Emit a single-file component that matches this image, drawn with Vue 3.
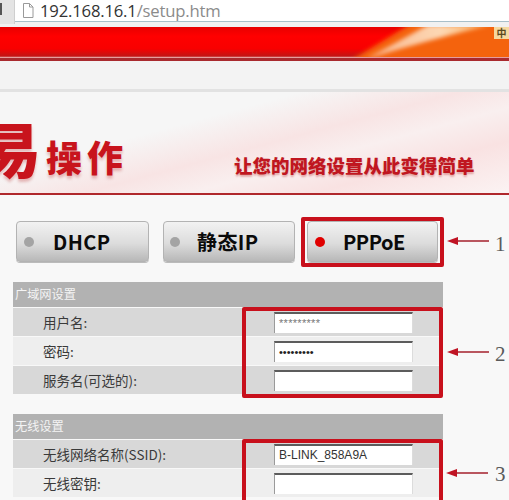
<script setup>
const modes = [
  { label: 'DHCP', on: false },
  { label: '静态IP', on: false },
  { label: 'PPPoE', on: true },
]
const wan = [
  { label: '用户名:', value: '*********', cls: 'stars' },
  { label: '密码:', value: '•••••••••', cls: 'dots' },
  { label: '服务名(可选的):', value: '', cls: '' },
]
const wifi = [
  { label: '无线网络名称(SSID):', value: 'B-LINK_858A9A', cls: '' },
  { label: '无线密钥:', value: '', cls: '' },
]
</script>

<template>
  <div class="page">
    <header class="browser">
      <div class="nav"><span class="nav-mark"></span></div>
      <div class="address">
        <svg class="doc" viewBox="0 0 12 15" width="12" height="15">
          <path d="M1.5 .5h6l3.5 3.5v10.5h-9.500z M7.500 .5v3.500h3.500" fill="#fff" stroke="#9a9a9a" />
        </svg>
        <span class="host">192.168.16.1</span><span class="path">/setup.htm</span>
      </div>
    </header>

    <div class="banner">
      <svg class="flare" viewBox="0 0 509 30" width="509" height="30">
        <defs>
          <filter id="soft" x="-10%" y="-50%" width="120%" height="200%"><feGaussianBlur stdDeviation="2" /></filter>
          <linearGradient id="pale" x1="0" y1="0" x2="1" y2="0">
            <stop offset="0" stop-color="#f9b48c" />
            <stop offset=".6" stop-color="#fdd8b4" />
            <stop offset="1" stop-color="#f9b060" />
          </linearGradient>
        </defs>
        <path d="M350 34L412 -4H515V34Z" fill="#f46410" filter="url(#soft)" />
        <path d="M366 32L428 -2H490Q432 12 366 32Z" fill="url(#pale)" filter="url(#soft)" />
      </svg>
      <span class="banner-tag">中</span>
    </div>
    <div class="strip"></div>

    <section class="hero">
      <div class="wash"></div>
      <div class="title"><span class="big">易</span><span class="mid">操作</span></div>
      <div class="slogan">让您的网络设置从此变得简单</div>
    </section>

    <main class="content">
      <div class="modes">
        <button v-for="m in modes" :key="m.label" class="mode" type="button">
          <span class="dot" :class="{ on: m.on }"></span>
          <span class="mode-label">{{ m.label }}</span>
        </button>
      </div>

      <div class="group first">
        <div class="group-head">广域网设置</div>
        <div v-for="r in wan" :key="r.label" class="row">
          <span class="row-label">{{ r.label }}</span>
          <span class="field" :class="r.cls">{{ r.value }}</span>
        </div>
      </div>

      <div class="group second">
        <div class="group-head">无线设置</div>
        <div v-for="r in wifi" :key="r.label" class="row">
          <span class="row-label">{{ r.label }}</span>
          <span class="field">{{ r.value }}</span>
        </div>
      </div>
    </main>

    <div class="mark box1"></div>
    <div class="mark box2"></div>
    <div class="mark box3"></div>

    <svg class="arrow a1" viewBox="0 0 44 12" width="44" height="12"><path d="M42 6H8" stroke="#a5202c" stroke-width="1.500"/><path d="M0 6l11-4v8z" fill="#c01424"/></svg>
    <svg class="arrow a2" viewBox="0 0 44 12" width="44" height="12"><path d="M42 6H8" stroke="#a5202c" stroke-width="1.500"/><path d="M0 6l11-4v8z" fill="#c01424"/></svg>
    <svg class="arrow a3" viewBox="0 0 44 12" width="44" height="12"><path d="M42 6H8" stroke="#a5202c" stroke-width="1.500"/><path d="M0 6l11-4v8z" fill="#c01424"/></svg>
    <span class="num n1">1</span>
    <span class="num n2">2</span>
    <span class="num n3">3</span>
  </div>
</template>

<style>
html, body { margin: 0; background: #f8f8f8; overflow: hidden; }
</style>

<style scoped>
.page {
  position: relative;
  width: 509px;
  height: 500px;
  overflow: hidden;
  background: #f8f8f8;
  font-family: "Noto Sans CJK SC", "Noto Sans", sans-serif;
}
.browser { display: flex; height: 27px; background: #f1f1f1; }
.nav { width: 15px; height: 24px; background: #e4e4e4; border-right: 1px solid #cfcfcf; box-sizing: border-box; }
.nav-mark { display: block; width: 2px; height: 12px; margin-top: 3px; background: #555; }
.address {
  flex: 1;
  height: 21px;
  display: flex;
  align-items: center;
  background: #fff;
  border-bottom: 1px solid #a9bfc9;
  font-family: "Open Sans", sans-serif;
  font-size: 16.700px;
  letter-spacing: -0.2px;
}
.doc { margin: 0 6px 0 7px; }
.host { color: #333; }
.path { color: #8b8b8b; }

.banner {
  position: relative;
  height: 31px;
  overflow: hidden;
  background: linear-gradient(#e80000 0, #ff0000 30%, #f80000 70%, #c21414 94%, #f3d0d0 100%);
}
.flare { position: absolute; left: 0; top: 0; display: block; }
.banner-tag { position: absolute; right: 0; top: 0; width: 15px; text-align: center; font-size: 10px; font-weight: 700; line-height: 12px; color: #5a4a20; background: #f6d9a0; }
.strip {
  height: 34px;
  box-sizing: border-box;
  border-top: 3px solid #a92a2e;
  border-bottom: 3px solid #e2e2e2;
  background: #f3f3f3;
}
.hero {
  position: relative;
  height: 103px;
  box-sizing: border-box;
  background: #f6f6f6;
  border-bottom: 2px solid #b0282c;
  overflow: hidden;
}
.wash {
  position: absolute;
  inset: 0;
  background:
    linear-gradient(165deg, transparent 34%, #f8e4e4 52%, #f9efef 64%, #f9e2e2 78%, #fbf3f3 100%);
}
.title {
  position: absolute;
  left: -19px;
  top: 25px;
  display: flex;
  align-items: flex-end;
  color: #c8141c;
  font-weight: 900;
  line-height: 1;
  text-shadow: 0 3px 3px rgba(170, 0, 0, .25);
  white-space: nowrap;
}
.big { font-size: 60px; }
.mid { font-size: 36px; letter-spacing: 5px; margin-left: 5px; margin-bottom: 3px; }
.slogan {
  position: absolute;
  left: 234px;
  top: 61px;
  font-size: 18.500px;
  line-height: 24px;
  font-weight: 900;
  color: #c01620;
  white-space: nowrap;
  text-shadow: 0 2px 2px rgba(170, 0, 0, .3);
}

.content { padding: 26px 0 0 13px; width: 430px; }
.modes { display: flex; padding-left: 3px; }
.mode {
  display: flex;
  align-items: center;
  width: 133px;
  height: 41px;
  padding: 0 0 0 7px;
  margin-right: 14px;
  flex: none;
  border: 1px solid #b3b3b3;
  border-radius: 4px;
  background: linear-gradient(#f2f2f2, #dcdcdc 55%, #b8b8b8);
  box-shadow: 0 1px 0 #bbb;
  box-sizing: border-box;
  font-family: "Noto Sans CJK SC", "Noto Sans", sans-serif;
}
.mode:nth-child(2) { width: 132px; margin-right: 12px; padding-left: 6px; }
.mode:nth-child(3) { width: 131px; margin-right: 0; }
.dot { width: 10px; height: 10px; border-radius: 50%; background: #a4a4a4; flex: none; }
.dot.on { background: #e00000; }
.mode-label { margin-left: 19px; font-size: 20px; font-weight: 700; color: #0a0a0a; letter-spacing: .4px; }
.mode:nth-child(2) .mode-label { margin-left: 17px; }
.mode:nth-child(3) .mode-label { margin-left: 18px; letter-spacing: -.5px; }

.group-head {
  height: 25px;
  line-height: 25px;
  padding-left: 2px;
  background: #b2b2b2;
  color: #f4f4f4;
  font-size: 12.200px;
}
.group.first { margin-top: 20px; }
.group.second { margin-top: 20px; }
.row {
  display: flex;
  align-items: center;
  height: 28px;
  background: #d8d8d8;
  font-size: 13.500px;
  color: #3a3a3a;
  margin-top: 1px;
}
.row:nth-child(3) { background: #eeeeee; }
.row-label { width: 261px; padding-left: 30px; box-sizing: border-box; white-space: nowrap; }
.field {
  display: block;
  width: 139px;
  height: 21px;
  line-height: 19px;
  padding-left: 4px;
  box-sizing: border-box;
  background: #fff;
  border-top: 2px solid #5c5c5c;
  border-left: 1px solid #9a9a9a;
  border-right: 1px solid #dcdcdc;
  font-family: "Liberation Sans", sans-serif;
  font-size: 12px;
  color: #333;
}
.field.stars { font-size: 11px; color: #777; letter-spacing: .3px; }
.field.dots { font-size: 11px; color: #222; letter-spacing: 0; }

.mark { position: absolute; border: 4px solid #c8101c; border-radius: 2px; box-sizing: border-box; }
.box1 { left: 301px; top: 217px; width: 143px; height: 50px; }
.box2 { left: 242px; top: 307px; width: 201px; height: 91px; }
.box3 { left: 242px; top: 439px; width: 201px; height: 70px; }

.arrow { position: absolute; }
.a1 { left: 447px; top: 235px; }
.a2 { left: 447px; top: 346px; }
.a3 { left: 446px; top: 467px; }
.num { position: absolute; left: 495px; font-family: "Liberation Serif", serif; font-size: 21px; line-height: 20px; color: #5a5a5a; }
.n1 { top: 234px; }
.n2 { top: 344px; }
.n3 { top: 464px; }
</style>
